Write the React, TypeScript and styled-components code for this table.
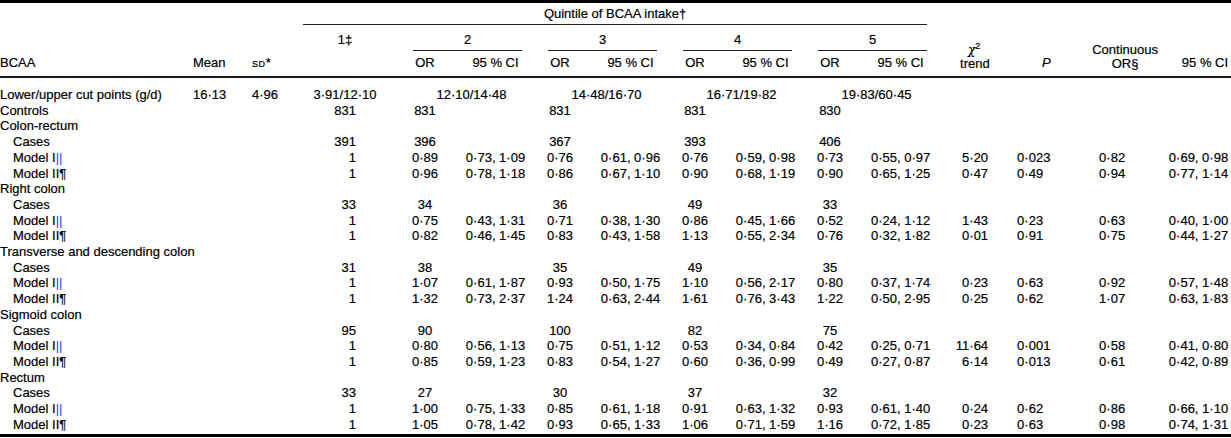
import React from 'react'
import styled, {createGlobalStyle} from 'styled-components'

type ModelRow = {
    label: string;
    mark: 'bars' | 'pilcrow';
    q1: string;
    quintiles: [string, string][];
    chi: string;
    p: string;
    cor: string;
    cci: string;
};

type Section = {
    name: string;
    cases: string[];
    models: ModelRow[];
};

const widths = [193, 59, 51, 97, 50, 85, 50, 85, 50, 85, 50, 85, 65, 85, 70, 71]

const cutPoints = ['12·10/14·48', '14·48/16·70', '16·71/19·82', '19·83/60·45']
const controls = ['831', '831', '831', '831', '830']

const m = (mark: 'bars' | 'pilcrow', q: string[], chi: string, p: string, cor: string, cci: string): ModelRow => ({
    label: mark === 'bars' ? 'Model I' : 'Model II',
    mark,
    q1: '1',
    quintiles: [[q[0], q[1]], [q[2], q[3]], [q[4], q[5]], [q[6], q[7]]],
    chi, p, cor, cci,
})

const sections: Section[] = [
    {
        name: 'Colon-rectum',
        cases: ['391', '396', '367', '393', '406'],
        models: [
            m('bars', ['0·89', '0·73, 1·09', '0·76', '0·61, 0·96', '0·76', '0·59, 0·98', '0·73', '0·55, 0·97'], '5·20', '0·023', '0·82', '0·69, 0·98'),
            m('pilcrow', ['0·96', '0·78, 1·18', '0·86', '0·67, 1·10', '0·90', '0·68, 1·19', '0·90', '0·65, 1·25'], '0·47', '0·49', '0·94', '0·77, 1·14'),
        ],
    },
    {
        name: 'Right colon',
        cases: ['33', '34', '36', '49', '33'],
        models: [
            m('bars', ['0·75', '0·43, 1·31', '0·71', '0·38, 1·30', '0·86', '0·45, 1·66', '0·52', '0·24, 1·12'], '1·43', '0·23', '0·63', '0·40, 1·00'),
            m('pilcrow', ['0·82', '0·46, 1·45', '0·83', '0·43, 1·58', '1·13', '0·55, 2·34', '0·76', '0·32, 1·82'], '0·01', '0·91', '0·75', '0·44, 1·27'),
        ],
    },
    {
        name: 'Transverse and descending colon',
        cases: ['31', '38', '35', '49', '35'],
        models: [
            m('bars', ['1·07', '0·61, 1·87', '0·93', '0·50, 1·75', '1·10', '0·56, 2·17', '0·80', '0·37, 1·74'], '0·23', '0·63', '0·92', '0·57, 1·48'),
            m('pilcrow', ['1·32', '0·73, 2·37', '1·24', '0·63, 2·44', '1·61', '0·76, 3·43', '1·22', '0·50, 2·95'], '0·25', '0·62', '1·07', '0·63, 1·83'),
        ],
    },
    {
        name: 'Sigmoid colon',
        cases: ['95', '90', '100', '82', '75'],
        models: [
            m('bars', ['0·80', '0·56, 1·13', '0·75', '0·51, 1·12', '0·53', '0·34, 0·84', '0·42', '0·25, 0·71'], '11·64', '0·001', '0·58', '0·41, 0·80'),
            m('pilcrow', ['0·85', '0·59, 1·23', '0·83', '0·54, 1·27', '0·60', '0·36, 0·99', '0·49', '0·27, 0·87'], '6·14', '0·013', '0·61', '0·42, 0·89'),
        ],
    },
    {
        name: 'Rectum',
        cases: ['33', '27', '30', '37', '32'],
        models: [
            m('bars', ['1·00', '0·75, 1·33', '0·85', '0·61, 1·18', '0·91', '0·63, 1·32', '0·93', '0·61, 1·40'], '0·24', '0·62', '0·86', '0·66, 1·10'),
            m('pilcrow', ['1·05', '0·78, 1·42', '0·93', '0·65, 1·33', '1·06', '0·71, 1·59', '1·16', '0·72, 1·85'], '0·23', '0·63', '0·98', '0·74, 1·31'),
        ],
    },
]

const EmptyTail = () => (
    <>
        <Cell/>
        <Cell/>
        <Cell/>
        <Cell/>
    </>
)

const CountRow = ({label, indent, values}: { label: string; indent?: boolean; values: string[] }) => (
    <tr>
        <Cell $pl={indent ? 13 : 0}>{label}</Cell>
        <Cell/>
        <Cell/>
        <Cell $align="right" $pr={44}>{values[0]}</Cell>
        {values.slice(1).map((v, i) => (
            <React.Fragment key={i}>
                <Cell $align="center">{v}</Cell>
                <Cell/>
            </React.Fragment>
        ))}
        <EmptyTail/>
    </tr>
)

const ModelLine = ({row, last}: { row: ModelRow; last?: boolean }) => (
    <tr>
        <Cell $pl={13} $pb={last ? 2 : 0}>
            {row.label}{row.mark === 'bars' ? <Mark>||</Mark> : '¶'}
        </Cell>
        <Cell/>
        <Cell/>
        <Cell $align="right" $pr={44}>{row.q1}</Cell>
        {row.quintiles.map(([or, ci], i) => (
            <React.Fragment key={i}>
                <Cell $align="center">{or}</Cell>
                <Cell $align="center" $pl={6}>{ci}</Cell>
            </React.Fragment>
        ))}
        <Cell $align="right" $pr={17}>{row.chi}</Cell>
        <Cell $pl={12}>{row.p}</Cell>
        <Cell $pl={9}>{row.cor}</Cell>
        <Cell $align="right" $pr={3}>{row.cci}</Cell>
    </tr>
)

export default function App() {
    return (
        <>
            <GlobalStyle/>
            <Table>
                <colgroup>
                    {widths.map((w, i) => <col key={i} style={{width: w}}/>)}
                </colgroup>
                <Head>
                    <tr>
                        <HeadCell rowSpan={3}>BCAA</HeadCell>
                        <HeadCell rowSpan={3}>Mean</HeadCell>
                        <HeadCell rowSpan={3}><SmallCaps>sd</SmallCaps>*</HeadCell>
                        <SpanCell colSpan={9} $top={3}>
                            <Rule $right={13}>Quintile of BCAA intake†</Rule>
                        </SpanCell>
                        <HeadCell rowSpan={3} $align="center" $pl={20} $pr={17}>
                            <Stack><Chi>χ</Chi><Sup>2</Sup></Stack>
                            <Stack>trend</Stack>
                        </HeadCell>
                        <HeadCell rowSpan={3} $pl={37}><i>P</i></HeadCell>
                        <HeadCell rowSpan={3} $align="center">
                            <Stack>Continuous</Stack>
                            <Stack>OR§</Stack>
                        </HeadCell>
                        <HeadCell rowSpan={3} $align="right" $pr={3}>95 % CI</HeadCell>
                    </tr>
                    <tr>
                        <HeadCell $align="center" $pr={13} $pb={3}>1‡</HeadCell>
                        {['2', '3', '4', '5'].map(q => (
                            <SpanCell key={q} colSpan={2} $top={7}>
                                <Rule $left={13} $right={13}>{q}</Rule>
                            </SpanCell>
                        ))}
                    </tr>
                    <tr>
                        <HeadCell $pt={4}/>
                        {['2', '3', '4', '5'].map(q => (
                            <React.Fragment key={q}>
                                <HeadCell $align="center" $pt={4}>OR</HeadCell>
                                <HeadCell $align="center" $pl={6} $pt={4}>95 % CI</HeadCell>
                            </React.Fragment>
                        ))}
                    </tr>
                </Head>
                <tbody>
                    <tr>
                        <Cell $pt={9}>Lower/upper cut points (g/d)</Cell>
                        <Cell $pt={9}>16·13</Cell>
                        <Cell $pt={9}>4·96</Cell>
                        <Cell $pt={9} $align="center" $pr={13}>3·91/12·10</Cell>
                        {cutPoints.map(c => (
                            <Cell key={c} colSpan={2} $pt={9} $align="center" $pl={8}>{c}</Cell>
                        ))}
                        <EmptyTail/>
                    </tr>
                    <CountRow label="Controls" values={controls}/>
                    {sections.map((s, si) => (
                        <React.Fragment key={s.name}>
                            <tr>
                                <Cell colSpan={16}>{s.name}</Cell>
                            </tr>
                            <CountRow label="Cases" indent values={s.cases}/>
                            {s.models.map((row, ri) => (
                                <ModelLine
                                    key={ri}
                                    row={row}
                                    last={si === sections.length - 1 && ri === s.models.length - 1}
                                />
                            ))}
                        </React.Fragment>
                    ))}
                </tbody>
            </Table>
        </>
    )
}

const GlobalStyle = createGlobalStyle`
  html, body {
    margin: 0;
    padding: 0;
    background: #fff;
  }

  body {
    font-family: "Liberation Sans", Arial, sans-serif;
    color: #000;
  }
`
const Table = styled.table`
  width: 1231px;
  table-layout: fixed;
  border-collapse: collapse;
  border-top: 3px solid #000;
  border-bottom: 3px solid #000;
  font-size: 13px;
  white-space: nowrap;
  -webkit-text-stroke: 0.2px #000;
`
const Head = styled.thead`
  border-bottom: 2px solid #1a1a1a;
`
const HeadCell = styled.th<{ $align?: string; $pl?: number; $pr?: number; $pt?: number; $pb?: number }>`
  padding: ${p => p.$pt ?? 0}px ${p => p.$pr ?? 0}px ${p => p.$pb ?? 5}px ${p => p.$pl ?? 0}px;
  font-weight: normal;
  text-align: ${p => p.$align ?? 'left'};
  vertical-align: bottom;
  line-height: 16px;
`
const SpanCell = styled.th<{ $top: number }>`
  padding: ${p => p.$top}px 0 0 0;
  font-weight: normal;
  vertical-align: bottom;
  line-height: 16px;
`
const Rule = styled.div<{ $left?: number; $right?: number }>`
  margin: 0 ${p => p.$right ?? 0}px 0 ${p => p.$left ?? 0}px;
  padding-bottom: 2px;
  border-bottom: 1px solid #222;
  text-align: center;
`
const Stack = styled.div`
  line-height: 14px;
`
const Chi = styled.i`
  font-family: "DejaVu Serif", serif;
  font-size: 12px;
`
const Sup = styled.sup`
  font-size: 9px;
  vertical-align: 5px;
  line-height: 0;
`
const SmallCaps = styled.span`
  font-variant: small-caps;
  letter-spacing: 0.6px;
`
const Cell = styled.td<{ $align?: string; $pl?: number; $pr?: number; $pt?: number; $pb?: number }>`
  padding: ${p => p.$pt ?? 0}px ${p => p.$pr ?? 0}px ${p => p.$pb ?? 0}px ${p => p.$pl ?? 0}px;
  text-align: ${p => p.$align ?? 'left'};
  line-height: 15.7px;
  vertical-align: top;
`
const Mark = styled.span`
  color: #1f3cf0;
  -webkit-text-stroke: 0;
`
